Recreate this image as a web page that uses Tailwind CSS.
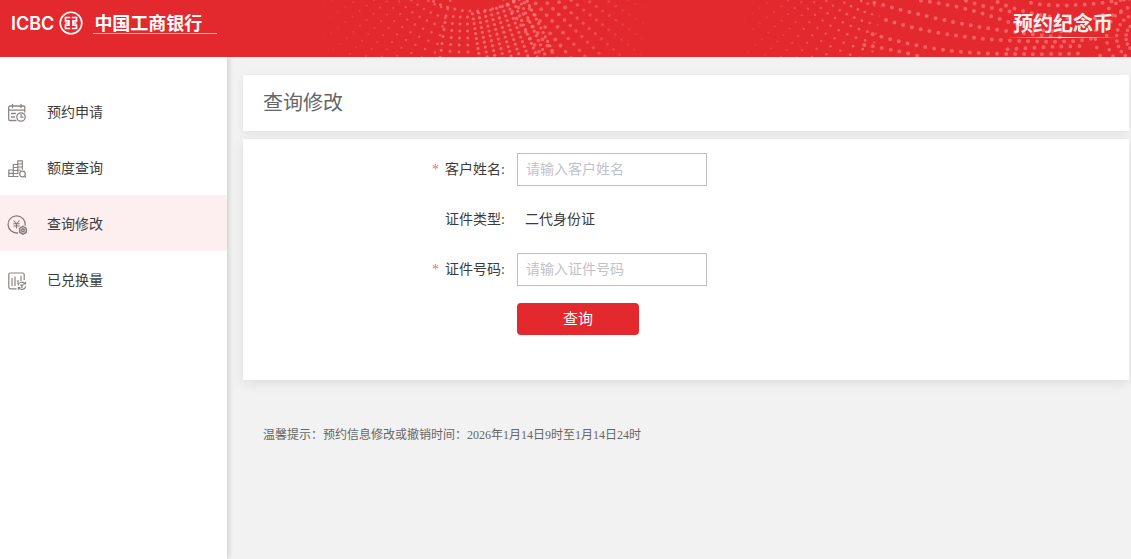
<!DOCTYPE html>
<html lang="zh-CN">
<head>
<meta charset="utf-8">
<meta name="viewport" content="width=device-width, initial-scale=1">
<title>预约纪念币 - 查询修改</title>
<script src="https://cdn.jsdelivr.net/npm/@tailwindcss/browser@4"></script>
</head>
<body class="flex min-h-screen flex-col bg-[#f2f2f2] font-['Liberation_Serif','Noto_Sans_CJK_SC',sans-serif] text-sm text-[#3c3c3c]">
<header class="relative z-10 flex h-[57px] shrink-0 items-start justify-between overflow-hidden bg-[#e3292e] text-white">
  <svg class="absolute inset-0 h-full w-full" viewBox="0 0 1131 57" preserveAspectRatio="xMaxYMin slice" aria-hidden="true">
    <g id="fan" fill="#ff7f80"></g>
    <g fill="none" stroke="#ff7074" stroke-linecap="round" stroke-width="12" transform="translate(831 0) scale(.3333)">
      <g opacity=".75">
        <path stroke-dasharray="0 27" d="M500 6 Q600 50 720 55 T880 30"/>
        <path stroke-dasharray="0 27" d="M270 2 Q400 18 520 62 T740 90"/>
        <path stroke-dasharray="0 27" d="M130 8 Q300 55 430 78 T700 112"/>
        <path stroke-dasharray="0 27" d="M165 60 Q330 112 540 122 T790 112"/>
        <path stroke-dasharray="0 27" d="M125 103 Q300 155 460 160 T760 160"/>
        <path stroke-dasharray="0 27" d="M100 135 Q170 145 260 168"/>
        <path stroke-dasharray="0 27" d="M405 2 Q480 28 560 38"/>
        <path stroke-dasharray="0 27" d="M600 8 Q700 30 900 -5"/>
        <path stroke-dasharray="0 27" d="M530 148 Q640 140 760 138"/>
      </g>
      <g stroke-width="11" opacity=".8">
        <ellipse stroke-dasharray="0 14" cx="925" cy="112" rx="40" ry="45"/>
        <ellipse stroke-dasharray="0 17" cx="925" cy="112" rx="68" ry="70"/>
        <ellipse stroke-dasharray="0 22" cx="925" cy="112" rx="98" ry="95"/>
        <ellipse stroke-dasharray="0 26" cx="925" cy="112" rx="132" ry="120"/>
      </g>
    </g>
  </svg>
  <a href="#" class="relative flex items-start pt-[11px] pl-[11px]" aria-label="ICBC 中国工商银行">
    <span class="pt-px font-['Inter',sans-serif] text-lg leading-6 font-semibold">ICBC</span>
    <svg class="ml-[5px] h-6 w-6" viewBox="0 0 24 24" fill="none" stroke="#fff" aria-hidden="true">
      <circle cx="12" cy="12" r="10.800" stroke-width="1.600"/>
      <path stroke-width="1.700" d="M11.200 6.500H6.500v3.300h3.500v4.400H6.500v3.300h4.700M12.800 6.500h4.700v3.300H14v4.400h3.500v3.300h-4.700M6.500 12H10M14 12h3.500"/>
    </svg>
    <span class="ml-[10px] w-[124px] border-b border-[#ffb3b3] pl-px font-['Noto_Sans_CJK_SC',sans-serif] text-lg leading-[22px] font-bold">中国工商银行</span>
  </a>
  <div class="relative mt-[11px] mr-3 w-[112px] text-center font-['Noto_Sans_CJK_SC',sans-serif] text-xl leading-6 font-bold text-[#fff0ee]">预约纪念币
    <div class="mt-[2px] h-px bg-linear-to-r from-transparent via-white to-transparent"></div>
  </div>
</header>
<div class="flex grow">
  <nav class="w-[227px] shrink-0 bg-white pt-[26px] shadow-[1px_0_6px_rgba(0,0,0,0.18)]" aria-label="主菜单">
    <a href="#" class="flex h-14 items-center gap-5 pt-[3px] pl-[7px]">
      <svg class="h-5 w-5" viewBox="0 0 20 20" fill="none" stroke="#8a8583" stroke-width="1.3" stroke-linecap="round" aria-hidden="true"><path d="M9 17.500H3a1.300 1.300 0 0 1-1.300-1.300V4.300A1.300 1.300 0 0 1 3 3h13.500a1.300 1.300 0 0 1 1.300 1.300V9M2 7.200h15.500M5.500 1.300v3.400M14 1.300v3.400M4.500 10.500h4M4.500 14h3"/><circle cx="14" cy="14" r="4.200"/><path d="M14 11.700v2.500h2"/></svg>
      <span>预约申请</span></a>
    <a href="#" class="flex h-14 items-center gap-5 pt-[3px] pl-[7px]">
      <svg class="h-5 w-5" viewBox="0 0 20 20" fill="none" stroke="#8a8583" stroke-width="1.200" aria-hidden="true"><path d="M11.500 17.500H1.800V11h4.500M6.300 17V5.500h4.500M10.800 15V1.800h4.500v9M6.300 8.500h4.500M6.300 11.500h4.500M6.300 14.500h4.500M10.800 5h4.500M10.800 8h4.500M10.800 11h3M1.800 14.300h4.500"/><circle cx="15.500" cy="15" r="2.800"/><path d="M17.500 17l1.500 1.500"/></svg>
      <span>额度查询</span></a>
    <a href="#" aria-current="page" class="flex h-14 items-center gap-5 bg-[#fdefef] pt-[3px] pl-[7px]">
      <svg class="h-5 w-5" viewBox="0 0 20 20" fill="none" stroke="#85797a" stroke-width="1.300" aria-hidden="true"><path d="M11 17.900A8.600 8.600 0 1 1 18.200 10.500"/><path stroke-width="1.100" d="M6.500 5.500l3 3.300 3-3.300M6.300 8.800h6.400M6.300 11h6.400M9.500 8.800v4.700"/><path fill="#d0c4c4" d="M16 11.300l3.400 2v4L16 19.300l-3.400-2v-4z"/><circle cx="16" cy="15.300" r="1.300" fill="#fdefef"/></svg>
      <span>查询修改</span></a>
    <a href="#" class="flex h-14 items-center gap-5 pt-[3px] pl-[7px]">
      <svg class="h-5 w-5" viewBox="0 0 20 20" fill="none" stroke="#8a8583" stroke-width="1.200" aria-hidden="true"><path d="M9.500 17.800H3.300a1.500 1.500 0 0 1-1.500-1.500V3.500A1.500 1.500 0 0 1 3.300 2h12.400a1.500 1.500 0 0 1 1.500 1.500V9"/><path d="M5 7v8M8 5.500V15M11 9v4M14 5v5"/><path d="M11 14.300a3.800 3.800 0 0 1 7-1.300M18.700 15.300a3.800 3.800 0 0 1-7 1.300M18.500 10.800V13h-2.200M11.300 18.700v-2.200h2.200M13.500 13.500l1.400 1.500 1.400-1.500M14.900 15v2"/></svg>
      <span>已兑换量</span></a>
  </nav>
  <main class="min-w-0 grow pt-[18px] pr-[2px] pl-4">
    <h1 class="flex h-14 items-center bg-white pl-5 text-xl text-[#666] shadow-[0_2px_8px_rgba(0,0,0,0.07)]">查询修改</h1>
    <form class="relative mt-2 flex flex-col gap-[18px] bg-white pt-[14px] pb-[45px] shadow-[0_3px_12px_rgba(0,0,0,0.09)]" onsubmit="return false">
      <div class="flex h-8 items-center">
        <label for="name" class="w-[274px] pt-px pr-3 text-right"><span class="mr-[6px] text-[#f56c6c]">*</span>客户姓名:</label>
        <input id="name" type="text" placeholder="请输入客户姓名" class="h-[33px] w-[190px] rounded-none border border-[#bfbfbf] bg-white px-2 pt-[2px] outline-none placeholder:text-[#bfc2cc]">
      </div>
      <div class="flex h-8 items-center">
        <span class="w-[274px] pt-px pr-3 text-right">证件类型:</span>
        <span class="pt-[2px] pl-2">二代身份证</span>
      </div>
      <div class="flex h-8 items-center">
        <label for="idno" class="w-[274px] pt-px pr-3 text-right"><span class="mr-[6px] text-[#f56c6c]">*</span>证件号码:</label>
        <input id="idno" type="text" placeholder="请输入证件号码" class="h-[33px] w-[190px] rounded-none border border-[#bfbfbf] bg-white px-2 pt-[2px] outline-none placeholder:text-[#bfc2cc]">
      </div>
      <div class="flex pl-[274px]">
        <button type="submit" class="h-8 w-[122px] rounded bg-[#e3292e] pt-[2px] text-[15px] text-white">查询</button>
      </div>
    </form>
    <p class="mt-[42px] pt-px pl-5 text-xs leading-6 text-[#666]">温馨提示：预约信息修改或撤销时间：2026年1月14日9时至1月14日24时</p>
  </main>
</div>
<script>
  // Fans of dots: each radiates from a centre above the header and fades out towards its sides.
  const fan = document.getElementById('fan');
  function addFan(cx, cy, a0, a1, step, r0, r1, gap, from, peakA, peakB, to, size, strength) {
    for (let a = a0; a <= a1; a += step) {
      const t = a * Math.PI / 180;
      for (let r = r0; r <= r1; r += gap) {
        const x = cx + r * Math.sin(t), y = cy + r * Math.cos(t);
        if (y < -2 || y > 59 || x < from || x > to) continue;
        const k = x < peakA ? (x - from) / (peakA - from) : x > peakB ? (to - x) / (to - peakB) : 1;
        const c = document.createElementNS('http://www.w3.org/2000/svg', 'circle');
        c.setAttribute('cx', x.toFixed(1));
        c.setAttribute('cy', y.toFixed(1));
        c.setAttribute('r', (size * (0.6 + 0.4 * k)).toFixed(2));
        c.setAttribute('opacity', (k * strength).toFixed(2));
        fan.appendChild(c);
      }
    }
  }
  addFan(473, -76, -32, 32, 5, 87, 87, 7, 290, 440, 560, 655, 1.5, 0.7);
  addFan(473, -76, -75, -16, 4.5, 80, 240, 9, 300, 440, 560, 655, 1.3, 0.6);
  addFan(465, -120, -8, 2, 3, 137, 240, 7, 300, 440, 560, 655, 1.5, 0.7);
  addFan(445, -160, 9, 28, 2, 176, 240, 5, 300, 440, 560, 655, 1.6, 0.7);
  addFan(430, -110, 34, 66, 3, 115, 300, 8, 300, 440, 560, 655, 1.9, 0.6);
  addFan(900, -90, -75, 0, 4, 90, 240, 9, 725, 860, 868, 885, 1.4, 0.65);
</script>
</body>
</html>
